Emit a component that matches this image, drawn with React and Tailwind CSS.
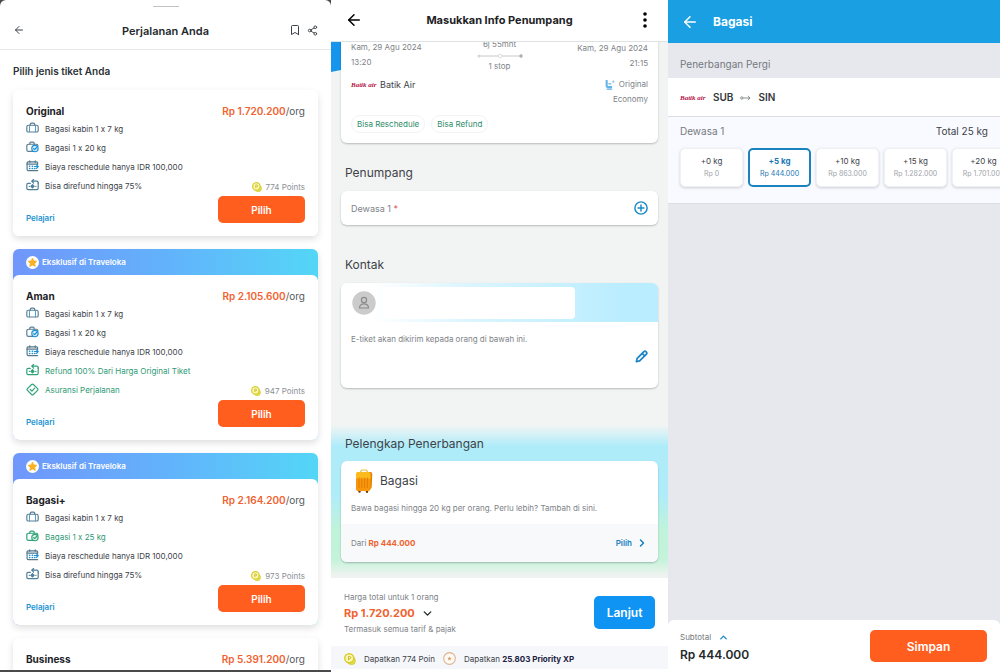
import React, { useState } from "react";
import { ArrowLeft, Bookmark, Share2, ChevronDown, ChevronUp, ChevronRight } from "lucide-react";

const svgBase = {
  viewBox: "0 0 24 24",
  fill: "none",
  strokeWidth: 2.2,
  strokeLinecap: "round",
  strokeLinejoin: "round",
  "aria-hidden": true,
};

function BagIcon() {
  return (
    <svg {...svgBase} className="size-[13px] shrink-0" stroke="#5d7f92">
      <path d="M8 6V4a2 2 0 0 1 2-2h4a2 2 0 0 1 2 2v2" />
      <rect x="1.5" y="6" width="21" height="12.500" rx="3" />
      <path d="M6.500 6v12.500M17.500 6v12.500" stroke="#4a9cc4" strokeWidth="1.8" />
    </svg>
  );
}

function BagCheckIcon({ green }) {
  const main = green ? "#2fa377" : "#5d7f92";
  const accent = green ? "#2fa377" : "#1b8fd6";
  return (
    <svg {...svgBase} className="size-[13px] shrink-0" stroke={main}>
      <path d="M7 6V4a2 2 0 0 1 2-2h4a2 2 0 0 1 2 2v2" />
      <path d="M16 19H4.500a3 3 0 0 1-3-3V9a3 3 0 0 1 3-3H19a3 3 0 0 1 3 3" />
      <circle cx="16.500" cy="14" r="5.800" stroke={accent} fill={green ? "#e3f6ee" : "#d9effc"} />
      <path d="m14 14 2 2 3.500-4" stroke={accent} />
    </svg>
  );
}

function CalendarIcon() {
  return (
    <svg {...svgBase} className="size-[13px] shrink-0" stroke="#56788c">
      <path d="M7 1.500v3M17 1.500v3" />
      <path d="M21.500 8V5.500a2 2 0 0 0-2-2H4a2 2 0 0 0-2 2V17a2.500 2.500 0 0 0 2.500 2.500H21.500" />
      <path d="M2 7.500h19" />
      <path d="M6.500 11.500h.5M11.500 11.500h.5M6.500 15.500h.5M11.500 15.500h.5M16 15.500h.5" stroke="#1b8fd6" strokeWidth="2.800" />
      <path d="M15.500 12h7M19.500 9l3 3-3 3.500" stroke="#1b8fd6" strokeWidth="2.200" />
    </svg>
  );
}

function RefundIcon({ green }) {
  const main = green ? "#2fa377" : "#4f7f99";
  return (
    <svg {...svgBase} className="size-[13px] shrink-0" stroke={main}>
      <path d="M8 8H4a2.500 2.500 0 0 0-2.500 2.500V17A2.500 2.500 0 0 0 4 19.500h16a2.500 2.500 0 0 0 2.500-2.500V7" />
      <path d="M22.500 8V6.500a2.500 2.500 0 0 0-2.500-2.500h-9M14 1l-3.500 3L14 7.500" />
      <path d="m12 10.500 3 3-3 3-3-3z" fill={main} />
      <path d="M6 13.500h.5M18 13.500h.5" />
    </svg>
  );
}

function InsuranceIcon() {
  return (
    <svg {...svgBase} className="size-[13px] shrink-0" stroke="#2fa377">
      <path d="M10.300 2.700a2.500 2.500 0 0 1 3.400 0l7.600 7.600a2.500 2.500 0 0 1 0 3.400l-7.600 7.600a2.500 2.500 0 0 1-3.400 0l-7.600-7.600a2.500 2.500 0 0 1 0-3.400z" />
      <path d="m8 12 3 3 5-5.500" />
    </svg>
  );
}

function CoinIcon({ className }) {
  return (
    <svg viewBox="0 0 24 24" fill="none" aria-hidden="true" className={className}>
      <circle cx="15" cy="15.500" r="7.800" fill="#e8df4a" stroke="#cdc42f" strokeWidth="1.400" />
      <circle cx="10.500" cy="10.500" r="9" fill="#fbf6b4" stroke="#d8cd2f" strokeWidth="3" />
      <path d="M9 14.500V7h2.300a2.300 2.300 0 0 1 0 4.600H9" stroke="#c8bd27" strokeWidth="2" />
    </svg>
  );
}

function StarBadge() {
  return (
    <svg viewBox="0 0 24 24" aria-hidden="true" className="size-[13px] shrink-0">
      <circle cx="12" cy="12" r="12" fill="#fff" />
      <path
        d="m12 4 2.400 5 5.600.8-4 3.900 1 5.500-5-2.600-5 2.600 1-5.500-4-3.900 5.600-.8z"
        fill="#f8b122"
        stroke="#f8b122"
        strokeWidth="1.500"
        strokeLinejoin="round"
      />
    </svg>
  );
}

function XpIcon() {
  return (
    <svg viewBox="0 0 24 24" fill="none" aria-hidden="true" className="size-[13px] shrink-0">
      <circle cx="12" cy="12" r="10.800" stroke="#dcb28c" strokeWidth="2" fill="#fffaf4" />
      <path d="m12 8.300 1.200 2.500 2.700.4-2 1.900.5 2.700L12 14.500l-2.400 1.300.5-2.700-2-1.900 2.700-.4z" fill="#d9a070" />
    </svg>
  );
}

function SeatIcon() {
  return (
    <svg viewBox="0 0 24 24" fill="none" aria-hidden="true" className="size-[10px] shrink-0" strokeLinecap="round" strokeLinejoin="round">
      <path d="M4 2v11a4 4 0 0 0 4 4h7" stroke="#62b3e8" strokeWidth="5" />
      <path d="M9 9h5M5 22h11" stroke="#62b3e8" strokeWidth="3" />
      <path d="M20 1.500v5M17.500 4h5" stroke="#9fc4da" strokeWidth="2" />
    </svg>
  );
}

function LuggageArt() {
  return (
    <svg viewBox="0 0 18 24" aria-hidden="true" className="h-6 w-[18px] shrink-0">
      <path d="M5.500 3.500 6 1.700a1 1 0 0 1 1-.7h4a1 1 0 0 1 1 .7l.5 1.800" fill="none" stroke="#e2bd4a" strokeWidth="1.200" />
      <circle cx="4.500" cy="22.500" r="1.200" fill="#6b3a10" />
      <circle cx="12" cy="22.700" r="1.200" fill="#6b3a10" />
      <path d="M13 3h2a2.300 2.300 0 0 1 2.300 2.400L16.700 18a2.500 2.500 0 0 1-1.500 2.200L12 22z" fill="#dd8200" />
      <rect x="1" y="3" width="14.500" height="19" rx="2.600" fill="#f8960c" />
      <path d="M1 9.500V5.600A2.600 2.600 0 0 1 3.600 3h9.300a2.600 2.600 0 0 1 2.600 2.600v3.900z" fill="#fbbb1e" />
      <path d="M4 9v9.500M6.800 9v9.500M9.600 9v9.500M12.400 9v9.500" stroke="#e07c00" strokeWidth=".9" strokeLinecap="round" />
    </svg>
  );
}

function BatikLogo() {
  return (
    <span className="w-[26px] shrink-0 whitespace-nowrap font-['Liberation_Serif',serif] text-[7px] leading-[12px] font-bold italic text-[#b3123f]">
      Batik air
    </span>
  );
}

const kabin = { icon: <BagIcon />, text: "Bagasi kabin 1 x 7 kg" };
const reschedule = { icon: <CalendarIcon />, text: "Biaya reschedule hanya IDR 100,000" };
const refund75 = { icon: <RefundIcon />, text: "Bisa direfund hingga 75%" };

const tickets = [
  {
    name: "Original",
    price: "Rp 1.720.200",
    points: "774",
    features: [kabin, { icon: <BagCheckIcon />, text: "Bagasi 1 x 20 kg" }, reschedule, refund75],
  },
  {
    name: "Aman",
    price: "Rp 2.105.600",
    points: "947",
    exclusive: true,
    features: [
      kabin,
      { icon: <BagCheckIcon />, text: "Bagasi 1 x 20 kg" },
      reschedule,
      { icon: <RefundIcon green />, text: "Refund 100% Dari Harga Original Tiket", green: true },
      { icon: <InsuranceIcon />, text: "Asuransi Perjalanan", green: true },
    ],
  },
  {
    name: "Bagasi+",
    price: "Rp 2.164.200",
    points: "973",
    exclusive: true,
    features: [kabin, { icon: <BagCheckIcon green />, text: "Bagasi 1 x 25 kg", green: true }, reschedule, refund75],
  },
  { name: "Business", price: "Rp 5.391.200" },
];

function TicketDetails({ ticket }) {
  return (
    <div className="flex justify-between">
      <div>
        <ul>
          {ticket.features.map((f) => (
            <li
              key={f.text}
              className={
                "flex h-[19px] items-center gap-1.5 text-[8px] whitespace-nowrap " +
                (f.green ? "text-[#2f9a74]" : "text-[#3d4348]")
              }
            >
              {f.icon}
              {f.text}
            </li>
          ))}
        </ul>
        <a href="#pelajari" className="mt-4 block text-[8px] leading-[14px] font-semibold text-[#1a93d1]">
          Pelajari
        </a>
      </div>
      <div className="flex flex-col items-end justify-end gap-[3px] pb-0.5">
        <p className="flex items-center gap-1 text-[8px] leading-[12px] text-[#8b9095]">
          <CoinIcon className="size-[10px] shrink-0" />
          {ticket.points} Points
        </p>
        <button type="button" className="h-[27px] w-[87px] rounded-[5px] bg-[#ff5e1f] pt-px text-[10px] font-semibold text-white">
          Pilih
        </button>
      </div>
    </div>
  );
}

function TicketCard({ ticket }) {
  return (
    <article
      className={
        "shrink-0 rounded-md shadow-[0_3px_7px_rgba(0,0,0,0.13)] " +
        (ticket.exclusive ? "bg-linear-to-r from-[#7096fb] via-[#62b2fb] to-[#53d6f6]" : "bg-white")
      }
    >
      {ticket.exclusive && (
        <div className="flex h-[26px] items-center gap-[3px] px-[13px] text-[8px] font-semibold text-white">
          <StarBadge />
          Eksklusif di Traveloka
        </div>
      )}
      <div className="rounded-md bg-white px-[13px] pt-[13px] pb-[11px]">
        <div className="flex items-center justify-between leading-4">
          <h3 className="text-[10px] font-bold text-[#1c2226]">{ticket.name}</h3>
          <p className="text-[10px] text-[#55595e]">
            <span className="font-semibold text-[#f0622f]">{ticket.price}</span>/org
          </p>
        </div>
        {ticket.features && <TicketDetails ticket={ticket} />}
      </div>
    </article>
  );
}

function TripPanel() {
  return (
    <section className="min-w-0 overflow-hidden bg-[#4a4a4a] pb-0.5">
      <div className="flex h-full flex-col overflow-hidden rounded-t-md bg-white">
        <div className="mx-auto mt-[6px] h-px w-[26px] shrink-0 bg-[#bfc3c6]" />
        <header className="flex h-[43px] shrink-0 items-center justify-between border-b border-[#e6e8ea] px-[13px] pt-1">
          <button type="button" aria-label="Kembali" className="flex w-[29px] items-center text-[#3a4045]">
            <ArrowLeft className="size-[12px]" />
          </button>
          <h1 className="pt-0.5 text-[11px] font-semibold text-[#23292d]">Perjalanan Anda</h1>
          <div className="flex items-center gap-[6px] text-[#3a4045]">
            <button type="button" aria-label="Simpan perjalanan">
              <Bookmark className="size-[12px]" />
            </button>
            <button type="button" aria-label="Bagikan">
              <Share2 className="size-[11px]" />
            </button>
          </div>
        </header>
        <div className="flex min-h-0 flex-1 flex-col overflow-hidden px-[13px] pt-[13px]">
          <h2 className="shrink-0 text-[10px] leading-4 font-semibold text-[#2c3236]">Pilih jenis tiket Anda</h2>
          <div className="mt-[11px] flex flex-col gap-[13px]">
            {tickets.map((t) => (
              <TicketCard key={t.name} ticket={t} />
            ))}
          </div>
        </div>
      </div>
    </section>
  );
}

const cardShadow = "shadow-[0_1px_2px_rgba(0,0,0,0.24)]";

function PassengerPanel() {
  return (
    <section className="flex min-w-0 flex-col overflow-hidden bg-[#f2f4f3] text-[#3d4348]">
      <header className="relative z-10 flex h-[42px] shrink-0 items-center justify-between border-b border-[#dfe2e3] bg-white px-[14px] pb-0.5 text-black">
        <button type="button" aria-label="Kembali">
          <ArrowLeft className="size-[18px]" />
        </button>
        <h1 className="pt-0.5 text-[11px] font-bold text-[#1d2225]">Masukkan Info Penumpang</h1>
        <button type="button" aria-label="Menu lainnya" className="flex w-[18px] justify-center">
          <svg viewBox="0 0 4 16" fill="currentColor" aria-hidden="true" className="h-4 w-1">
            <circle cx="2" cy="2" r="1.800" />
            <circle cx="2" cy="8" r="1.800" />
            <circle cx="2" cy="14" r="1.800" />
          </svg>
        </button>
      </header>

      <div className="flex min-h-0 flex-1 flex-col overflow-hidden">
        <div className="relative -mt-1 shrink-0 px-[10px]">
          <svg viewBox="0 0 10 34" preserveAspectRatio="none" aria-hidden="true" className="absolute top-0 left-0 h-[34px] w-[10px]">
            <path d="M0 0h10v32L0 34z" fill="#1596ec" />
          </svg>
          <article className={"relative rounded-b-md bg-white px-[10px] pb-[10px] text-[8px] text-[#7e8388] " + cardShadow}>
            <div className="grid grid-cols-3">
              <div className="pt-0.5 leading-[15px]">
                <p>Kam, 29 Agu 2024</p>
                <p>13:20</p>
              </div>
              <div className="flex flex-col items-center leading-[12px]">
                <p>6j 55mnt</p>
                <svg viewBox="0 0 46 12" aria-hidden="true" className="h-3 w-[46px]">
                  <path d="M2 6h42" stroke="#c4c8cb" strokeWidth="1" />
                  <circle cx="2" cy="6" r="1.500" fill="#d3d6d8" />
                  <circle cx="23" cy="6" r="1.800" fill="#fff" stroke="#d3d6d8" strokeWidth=".8" />
                  <circle cx="44" cy="6" r="1.700" fill="#a9adb0" />
                </svg>
                <p className="-mt-0.5">1 stop</p>
              </div>
              <div className="pt-[3px] text-right leading-[15px]">
                <p>Kam, 29 Agu 2024</p>
                <p>21:15</p>
              </div>
            </div>
            <div className="mt-[5px] flex justify-between leading-[15px]">
              <p className="flex h-[15px] items-center gap-[3px] text-[9px] text-[#3d4348]">
                <BatikLogo />
                Batik Air
              </p>
              <div className="text-right">
                <p className="flex items-center gap-1">
                  <SeatIcon />
                  Original
                </p>
                <p>Economy</p>
              </div>
            </div>
            <ul className="mt-2 flex gap-1.5 leading-4 text-[#2c8c69]">
              <li className="rounded-full border border-[#f1f3f4] px-[5px]">Bisa Reschedule</li>
              <li className="rounded-full border border-[#f1f3f4] px-[5px]">Bisa Refund</li>
            </ul>
          </article>
        </div>

        <h2 className="mt-[21px] shrink-0 px-[14px] text-[12px] leading-[18px]">Penumpang</h2>
        <div className="mt-[9px] shrink-0 px-[10px]">
          <button
            type="button"
            aria-label="Tambah Dewasa 1"
            className={"flex h-[34px] w-full items-center justify-between rounded-md bg-white px-[10px] text-[9px] text-[#7e8388] " + cardShadow}
          >
            <span className="pt-px">
              Dewasa 1 <span className="text-[#e0525c]">*</span>
            </span>
            <svg {...svgBase} strokeWidth="2.500" stroke="#1a8ac6" className="size-[14px]">
              <circle cx="12" cy="12" r="10.500" />
              <path d="M12 7v10M7 12h10" />
            </svg>
          </button>
        </div>

        <h2 className="mt-[31px] shrink-0 px-[14px] text-[12px] leading-[18px]">Kontak</h2>
        <div className="mt-[9px] shrink-0 px-[10px]">
          <article className={"h-[105px] overflow-hidden rounded-md bg-white " + cardShadow}>
            <div className="flex h-[39px] items-center gap-[7px] bg-linear-to-r from-white from-10% via-[#dbf5ff] via-40% to-[#b9edff] to-90% px-[11px]">
              <svg viewBox="0 0 24 24" fill="none" aria-hidden="true" className="size-6 shrink-0" stroke="#8b8b8b" strokeWidth="1.200" strokeLinejoin="round">
                <circle cx="12" cy="12" r="11.700" fill="#cbcbcb" stroke="none" />
                <circle cx="12" cy="9" r="2.600" />
                <path d="M7.500 17c0-2.800 1.800-4.200 4.500-4.200s4.500 1.400 4.500 4.200z" />
              </svg>
              <div className="h-8 w-[65%] rounded-[4px] bg-white" />
            </div>
            <div className="px-[10px] pt-[10px]">
              <p className="text-[8px] leading-[14px] text-[#7e8388]">E-tiket akan dikirim kepada orang di bawah ini.</p>
              <button type="button" aria-label="Ubah kontak" className="mt-1 ml-auto block">
                <svg {...svgBase} strokeWidth="3.200" stroke="#1c86c7" className="size-[13px]">
                  <path d="M2.500 21.500 4 15.500 16 3.300a3.300 3.300 0 0 1 4.700 4.700L8.500 20z" />
                  <path d="m13.500 6.500 4 4" />
                </svg>
              </button>
            </div>
          </article>
        </div>

        <div className="mt-[37px] shrink-0 bg-[linear-gradient(to_bottom,#f2f4f3_0%,#aeecfa_14%,#aeecfa_45%,#bff3da_68%,#c4f3da_88%,#eef3f0_98%)] px-[10px] pt-[10px] pb-4">
          <h2 className="px-1 text-[12px] leading-[18px]">Pelengkap Penerbangan</h2>
          <article className={"mt-2 overflow-hidden rounded-md bg-white " + cardShadow}>
            <div className="px-[10px] pt-2 pb-[10px]">
              <h3 className="flex items-center gap-[7px] pl-1 text-[12px]">
                <LuggageArt />
                Bagasi
              </h3>
              <p className="mt-[9px] text-[8px] leading-[12px] text-[#7e8388]">
                Bawa bagasi hingga 20 kg per orang. Perlu lebih? Tambah di sini.
              </p>
            </div>
            <div className="flex h-[38px] items-center justify-between bg-[#f8f9fb] px-[10px] text-[8px] text-[#7e8388]">
              <p>
                Dari <span className="font-bold text-[#f0622f]">Rp 444.000</span>
              </p>
              <button type="button" className="flex items-center gap-1 font-semibold text-[#1582bd]">
                Pilih
                <ChevronRight className="size-[12px]" strokeWidth={3} />
              </button>
            </div>
          </article>
        </div>
      </div>

      <footer className="shrink-0 bg-white pb-[3px]">
        <div className="flex h-[68px] items-center justify-between px-[13px]">
          <div className="pt-0.5 text-[8px] leading-4 text-[#7e8388]">
            <p>Harga total untuk 1 orang</p>
            <button type="button" className="flex items-center gap-1.5 text-[11px] leading-4 font-bold text-[#f0622f]">
              Rp 1.720.200
              <ChevronDown className="size-[13px] text-[#23292d]" strokeWidth={2.5} />
            </button>
            <p>Termasuk semua tarif &amp; pajak</p>
          </div>
          <button type="button" className="h-[33px] w-[61px] rounded-[5px] bg-[#0f94f4] pt-px text-[12px] font-semibold text-white">
            Lanjut
          </button>
        </div>
        <div className="flex h-[23px] items-center gap-2 bg-[#f6f7fb] px-[13px] pt-0.5 text-[8px] text-[#3d4348]">
          <CoinIcon className="size-[12px] shrink-0" />
          <span>Dapatkan 774 Poin</span>
          <XpIcon />
          <span>
            Dapatkan <b className="font-bold text-[#1c2140]">25.803 Priority XP</b>
          </span>
        </div>
      </footer>
    </section>
  );
}

const options = [
  { kg: "+0 kg", price: "Rp 0" },
  { kg: "+5 kg", price: "Rp 444.000" },
  { kg: "+10 kg", price: "Rp 863.000" },
  { kg: "+15 kg", price: "Rp 1.282.000" },
  { kg: "+20 kg", price: "Rp 1.701.000" },
];

function BaggagePanel() {
  const [selected, setSelected] = useState("+5 kg");
  return (
    <section className="flex min-w-0 flex-col overflow-hidden bg-[#e6e8ed] text-[#3d4348]">
      <header className="flex h-[43px] shrink-0 items-center gap-[14px] bg-[#1a9fe3] px-[13px] text-white">
        <button type="button" aria-label="Kembali">
          <ArrowLeft className="size-[18px]" />
        </button>
        <h1 className="text-[12px] font-bold">Bagasi</h1>
      </header>
      <h2 className="flex h-[35px] shrink-0 items-center px-3 pt-[7px] text-[10px] text-[#74797e]">Penerbangan Pergi</h2>
      <div className="flex h-[39px] shrink-0 items-center gap-[7px] border-b border-[#dcdee3] bg-white px-3 pt-px text-[10px] font-semibold text-[#33383c]">
        <BatikLogo />
        <span>SUB</span>
        <svg viewBox="0 0 12 8" fill="none" aria-hidden="true" className="h-2 w-[11px]" stroke="#7f8488" strokeWidth="1">
          <circle cx="2" cy="4" r="1.300" />
          <path d="M3.500 4H11M8.500 1.800 11 4 8.500 6.200" />
        </svg>
        <span>SIN</span>
      </div>
      <div className="shrink-0 overflow-hidden border-b border-[#dcdee3] bg-[#f9faff] px-3 pt-[7px] pb-4">
        <div className="flex justify-between text-[10px] leading-[15px]">
          <p className="text-[#74797e]">Dewasa 1</p>
          <p>Total 25 kg</p>
        </div>
        <div role="radiogroup" aria-label="Bagasi tambahan" className="mt-[9px] flex gap-[5px]">
          {options.map((o) => {
            const active = o.kg === selected;
            return (
              <label
                key={o.kg}
                className={
                  "relative flex h-[39px] w-[63px] shrink-0 cursor-pointer flex-col items-center justify-center rounded-[5px] bg-white whitespace-nowrap " +
                  (active
                    ? "border-2 border-[#1a83bd] text-[#1a78b4]"
                    : "border border-[#f0f1f5] shadow-[0_1px_3px_rgba(0,0,0,0.18)]")
                }
              >
                <input
                  type="radio"
                  name="bagasi"
                  className="sr-only"
                  checked={active}
                  onChange={() => setSelected(o.kg)}
                />
                <span className={"text-[8px] leading-[13px] " + (active ? "font-bold" : "")}>{o.kg}</span>
                <span className={"text-[7px] leading-[12px] " + (active ? "" : "text-[#a0a4a9]")}>{o.price}</span>
              </label>
            );
          })}
        </div>
      </div>
      <footer className="mt-auto flex h-[52px] shrink-0 items-center justify-between rounded-t-md bg-white pr-[13px] pl-3">
        <div className="pt-0.5">
          <button type="button" className="flex items-center gap-[7px] text-[8px] leading-4 text-[#74797e]">
            Subtotal
            <ChevronUp className="size-[11px] text-[#1a8ac6]" strokeWidth={3} />
          </button>
          <p className="text-[12px] leading-5 font-semibold text-[#23292d]">Rp 444.000</p>
        </div>
        <button type="button" className="h-8 w-[117px] rounded-[5px] bg-[#ff5e1f] pt-px text-[12px] font-semibold text-white">
          Simpan
        </button>
      </footer>
    </section>
  );
}

export default function App() {
  return (
    <main className="grid h-screen grid-cols-[331fr_337fr_332fr] grid-rows-1 overflow-hidden font-['Inter','Noto_Sans',sans-serif] [font-feature-settings:'calt'_0]">
      <TripPanel />
      <PassengerPanel />
      <BaggagePanel />
    </main>
  );
}
